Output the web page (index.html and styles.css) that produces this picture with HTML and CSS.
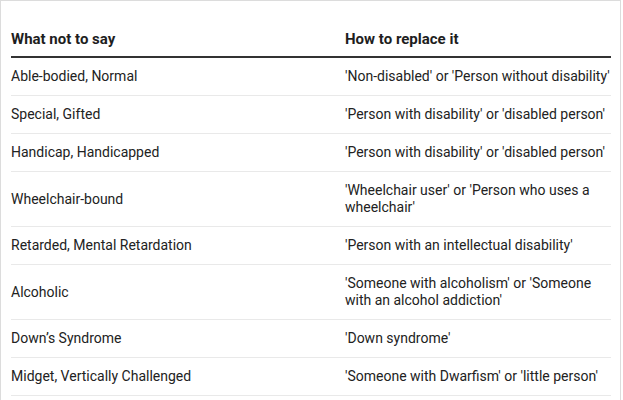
FILE: index.html
```html
<!DOCTYPE html>
<html>
<head>
<meta charset="utf-8">
<link rel="stylesheet" href="styles.css">
</head>
<body>
<div class="frame">
  <table class="terms">
    <colgroup><col class="c1"><col class="c2"></colgroup>
    <thead>
      <tr><th>What not to say</th><th>How to replace it</th></tr>
    </thead>
    <tbody>
      <tr><td>Able-bodied, Normal</td><td>'Non-disabled' or 'Person without disability'</td></tr>
      <tr><td>Special, Gifted</td><td>'Person with disability' or 'disabled person'</td></tr>
      <tr><td>Handicap, Handicapped</td><td>'Person with disability' or 'disabled person'</td></tr>
      <tr><td>Wheelchair-bound</td><td>'Wheelchair user' or 'Person who uses a wheelchair'</td></tr>
      <tr><td>Retarded, Mental Retardation</td><td>'Person with an intellectual disability'</td></tr>
      <tr><td>Alcoholic</td><td>'Someone with alcoholism' or 'Someone with an alcohol addiction'</td></tr>
      <tr><td>Down’s Syndrome</td><td>'Down syndrome'</td></tr>
      <tr><td>Midget, Vertically Challenged</td><td>'Someone with Dwarfism' or 'little person'</td></tr>
    </tbody>
  </table>
</div>
</body>
</html>
```

FILE: styles.css
```css
html, body {
  margin: 0;
  padding: 0;
  background: #fff;
}
body {
  font-family: Roboto, "Liberation Sans", sans-serif;
  font-size: 14px;
  color: #222;
}
.frame {
  box-sizing: border-box;
  width: 621px;
  border: 1px solid #dcdcdc;
  border-bottom: none;
  padding: 19px 10px 0 10px;
  min-height: 400px;
}
.terms {
  width: 600px;
  border-collapse: collapse;
  table-layout: fixed;
}
.c1 { width: 334px; }
.terms th {
  text-align: left;
  font-size: 15px;
  font-weight: 700;
  line-height: 18px;
  padding: 10px 0 8px 0;
  border-bottom: 2px solid #333;
  color: #1e1e1e;
}
.terms td {
  line-height: 17px;
  padding: 10px 0 10px 0;
  border-bottom: 1px solid #e9e9e9;
  vertical-align: middle;
}
```
